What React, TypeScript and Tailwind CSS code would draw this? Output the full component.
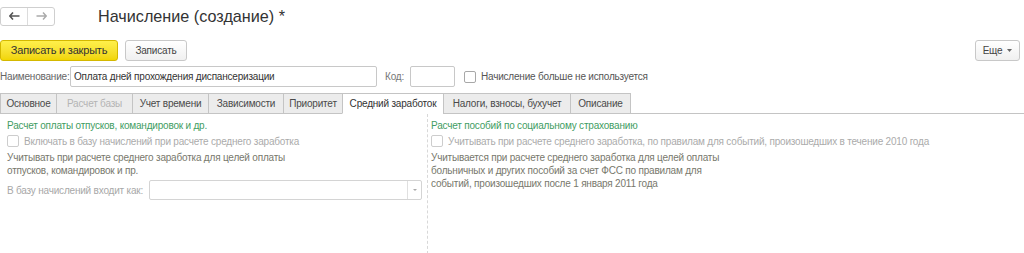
import React from "react";

const font = { fontFamily: '"Liberation Sans", Arial, sans-serif' };

function Tab({ label, w, active, disabled }: { label: string; w: string; active?: boolean; disabled?: boolean }) {
  return (
    <div
      className={
        "h-[21px] flex items-center justify-center border border-[#c4c4c4] -ml-px first:ml-0 whitespace-nowrap " +
        w +
        " " +
        (active ? "bg-white border-b-white text-[#333]" : "bg-[#ececec] text-[#4a4a4a]") +
        (disabled ? " !text-[#b4b4b4]" : "")
      }
    >
      {label}
    </div>
  );
}

export default function App() {
  return (
    <div
      className="w-[1024px] h-[253px] bg-white overflow-hidden text-[#444] text-[10px] tracking-[-0.2px]"
      style={font}
    >
      {/* top row */}
      <div className="flex items-center h-[30px] pt-[2px]">
        <div className="flex h-[19px] border border-[#cfcfcf] rounded-[3px] bg-white">
          <div className="w-[27px] flex items-center justify-center border-r border-[#dcdcdc]">
            <svg width="11" height="8" viewBox="0 0 11 8">
              <path d="M4 0.5 L0.8 4 L4 7.5 M1 4 H10.5" stroke="#555" strokeWidth="1.6" fill="none" />
            </svg>
          </div>
          <div className="w-[26px] flex items-center justify-center">
            <svg width="11" height="8" viewBox="0 0 11 8">
              <path d="M7 0.5 L10.2 4 L7 7.5 M10 4 H0.5" stroke="#aaa" strokeWidth="1.4" fill="none" />
            </svg>
          </div>
        </div>
        <div className="ml-[43px] text-[16.2px] tracking-normal text-[#333]">Начисление (создание) *</div>
      </div>

      {/* buttons */}
      <div className="flex items-center h-[21px] mt-[10px]">
        <div className="h-[21px] w-[118px] flex items-center justify-center rounded-[3px] bg-gradient-to-b from-[#fff04a] to-[#f1d500] border border-[#d4b800] text-[11px] text-[#333]">
          Записать и закрыть
        </div>
        <div className="ml-[7px] h-[21px] w-[62px] flex items-center justify-center rounded-[3px] bg-gradient-to-b from-white to-[#f0f0f0] border border-[#c8c8c8] text-[#444]">
          Записать
        </div>
        <div className="flex-1" />
        <div className="mr-[4px] h-[21px] w-[45px] flex items-center justify-center gap-[5px] rounded-[3px] bg-gradient-to-b from-white to-[#f0f0f0] border border-[#c8c8c8] text-[#444]">
          Еще
          <svg width="5" height="3" viewBox="0 0 5 3"><path d="M0 0 H5 L2.5 3 Z" fill="#666" /></svg>
        </div>
      </div>

      {/* fields */}
      <div className="flex items-center h-[21px] mt-[5px]">
        <span className="w-[66px] text-[#666] whitespace-nowrap">Наименование:</span>
        <div className="ml-[4px] h-[21px] w-[307px] border border-[#c8c8c8] rounded-[2px] flex items-center px-[3px] text-[#333] whitespace-nowrap">
          Оплата дней прохождения диспансеризации
        </div>
        <span className="ml-[8px] w-[20px] text-[#777]">Код:</span>
        <div className="ml-[5px] h-[21px] w-[45px] border border-[#c8c8c8] rounded-[2px]" />
        <div className="ml-[9px] w-[12px] h-[12px] border border-[#a8a8a8] rounded-[2px] bg-white" />
        <span className="ml-[5px] text-[#555] whitespace-nowrap">Начисление больше не используется</span>
      </div>

      {/* tabs */}
      <div className="flex mt-[6px] border-b border-[#c4c4c4] h-[21px]">
        <Tab label="Основное" w="w-[57px]" />
        <Tab label="Расчет базы" w="w-[77px]" disabled />
        <Tab label="Учет времени" w="w-[77px]" />
        <Tab label="Зависимости" w="w-[76px]" />
        <Tab label="Приоритет" w="w-[60px]" />
        <Tab label="Средний заработок" w="w-[102px]" active />
        <Tab label="Налоги, взносы, бухучет" w="w-[128px]" />
        <Tab label="Описание" w="w-[61px]" />
      </div>

      {/* content */}
      <div className="flex">
        <div className="w-[428px] pl-[7px] pt-[5px] border-r border-dashed border-[#d8d8d8] h-[140px]">
          <div className="text-[#3f9d63] leading-[13px] h-[13px]">Расчет оплаты отпусков, командировок и др.</div>
          <div className="flex items-center mt-[2px] h-[14px]">
            <div className="w-[12px] h-[12px] border border-[#cdcdcd] rounded-[2px]" />
            <span className="ml-[5px] text-[#ababab]">Включать в базу начислений при расчете среднего заработка</span>
          </div>
          <div className="mt-[3px] leading-[13px] text-[#78786c]">
            Учитывать при расчете среднего заработка для целей оплаты
            <br />
            отпусков, командировок и пр.
          </div>
          <div className="flex items-center mt-[3px] h-[20px]">
            <span className="w-[138px] text-[#a8a8a8] whitespace-nowrap">В базу начислений входит как:</span>
            <div className="ml-[4px] h-[20px] w-[273px] border border-[#d4d4d4] rounded-[2px] flex justify-end">
              <div className="w-[14px] border-l border-[#e0e0e0] flex items-center justify-center">
                <svg width="4" height="2" viewBox="0 0 4 2"><path d="M0 0 H4 L2 2 Z" fill="#aaa" /></svg>
              </div>
            </div>
          </div>
        </div>
        <div className="pl-[3px] pt-[5px]">
          <div className="text-[#3f9d63] leading-[13px] h-[13px]">Расчет пособий по социальному страхованию</div>
          <div className="flex items-center mt-[2px] h-[14px]">
            <div className="w-[12px] h-[12px] border border-[#cdcdcd] rounded-[2px]" />
            <span className="ml-[5px] text-[#ababab] whitespace-nowrap">
              Учитывать при расчете среднего заработка, по правилам для событий, произошедших в течение 2010 года
            </span>
          </div>
          <div className="mt-[3px] leading-[13px] text-[#78786c]">
            Учитывается при расчете среднего заработка для целей оплаты
            <br />
            больничных и других пособий за счет ФСС по правилам для
            <br />
            событий, произошедших после 1 января 2011 года
          </div>
        </div>
      </div>
    </div>
  );
}
